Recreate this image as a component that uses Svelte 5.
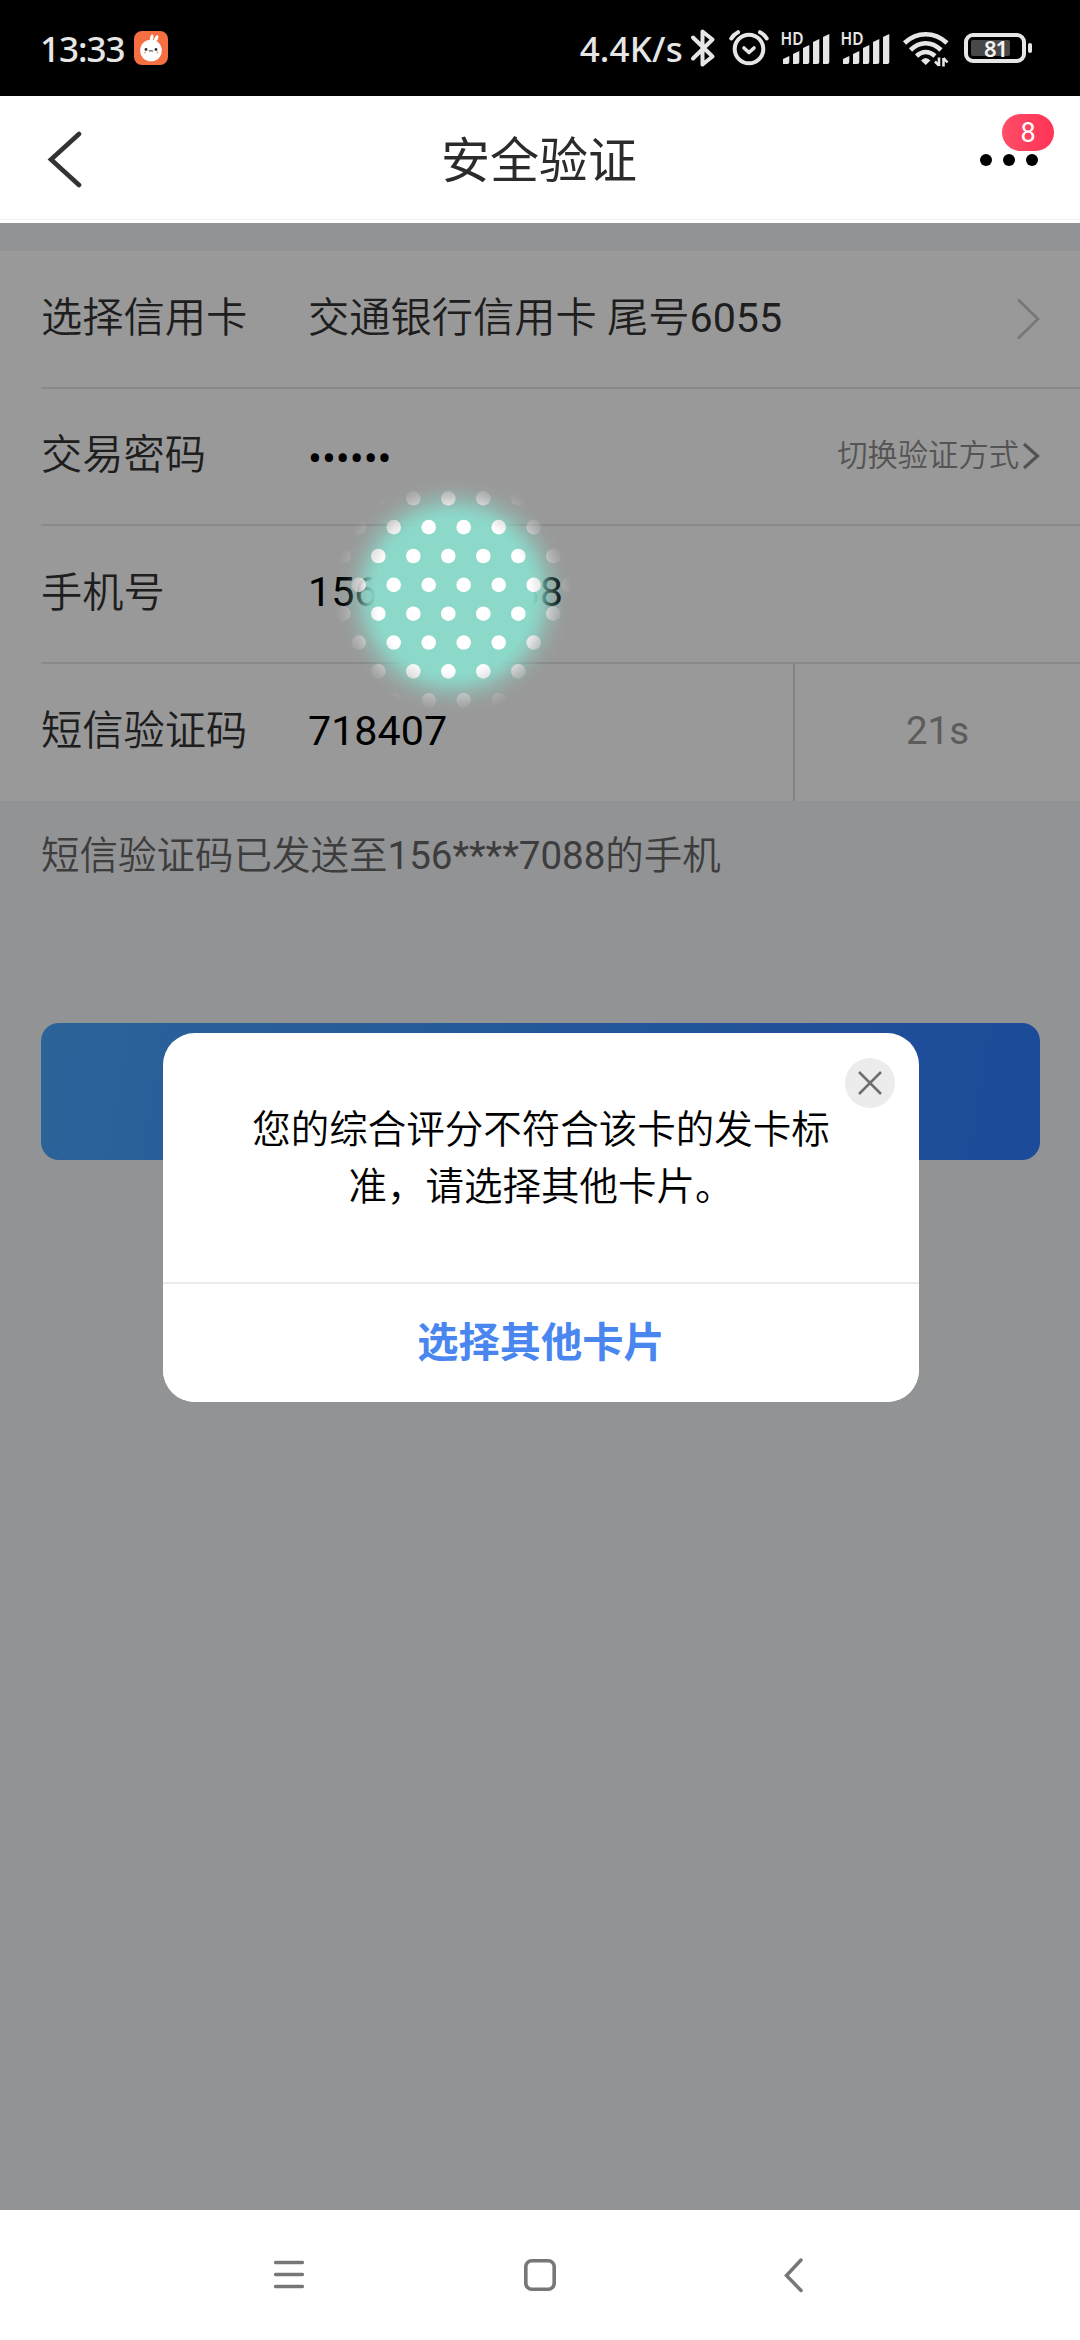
<script>
  const tarjeta = { banco: '交通银行信用卡', final: '6055' };
  let codigo = '718407';
  let segundos = 21;

  // Barras de señal: posición y altura de cada una
  const barras = [
    { x: 3, alto: 8 },
    { x: 13, alto: 13 },
    { x: 23, alto: 19 },
    { x: 33, alto: 25 },
    { x: 43, alto: 30 },
  ];

  // Trama de puntos del parche, filas alternas desplazadas
  const puntos = [];
  for (let fila = 0; fila < 8; fila++) {
    const inicio = fila % 2 ? 1.7 : -13.7;
    for (let col = 0; col < 8; col++) {
      puntos.push({ x: inicio + col * 35, y: 33.3 + fila * 28.85 });
    }
  }
</script>

<div class="pantalla">
  <!-- Barra de estado -->
  <div class="estado">
    <span class="hora">13:33</span>
    <svg class="conejo" width="34" height="34" viewBox="0 0 34 34">
      <rect width="34" height="34" rx="8" fill="#f56f43" />
      <ellipse cx="17.5" cy="7.5" rx="1.7" ry="4" fill="#fff" transform="rotate(12 17.5 8)" />
      <ellipse cx="22" cy="8" rx="1.7" ry="4" fill="#fff" transform="rotate(25 22 8)" />
      <circle cx="17" cy="19.5" r="10.8" fill="#fff" />
      <circle cx="12" cy="18.5" r="1.4" fill="#333" />
      <circle cx="22" cy="18.5" r="1.4" fill="#333" />
      <path d="M14.8 19.5q1.2 1.6 2.2 0q1.2 1.6 2.2 0" fill="none" stroke="#333" stroke-width="1" />
      <circle cx="11" cy="21.5" r="1" fill="#f5a98c" />
      <circle cx="23.5" cy="21.5" r="1" fill="#f5a98c" />
    </svg>
    <div class="iconos">
      <span class="velocidad">4.4K/s</span>
      <svg class="bt" width="26" height="40" viewBox="0 0 26 40">
        <path d="M3 9.5L22.5 28.5L12.5 36.5V3.5L22.5 11.5L3 30.5" fill="none" stroke="#e6e6e6" stroke-width="4" stroke-linejoin="round" stroke-linecap="round" />
      </svg>
      <svg class="alarma" width="40" height="40" viewBox="0 0 40 40" fill="none" stroke="#e6e6e6" stroke-width="4" stroke-linecap="round">
        <circle cx="20" cy="21" r="14.3" />
        <path d="M2.3 10.5Q4.5 6.5 9 4.2M37.7 10.5Q35.5 6.5 31 4.2" />
        <path d="M15 20L20 24.5L25 20" stroke-width="3.6" stroke-linejoin="round" />
      </svg>
      {#each [1, 2] as sim}
        <svg class="senal" width="52" height="56" viewBox="0 -8 52 56">
          <text class="hd" x="0.5" y="16.5" textLength="23" lengthAdjust="spacingAndGlyphs">HD</text>
          {#each barras as barra}
            <path d="M{barra.x} 36V{39 - barra.alto}L{barra.x + 6.3} {36 - barra.alto}V34Q{barra.x + 6.3} 36 {barra.x + 4.3} 36Z" fill="#e6e6e6" />
          {/each}
        </svg>
      {/each}
      <svg class="wifi" width="48" height="40" viewBox="0 0 48 40" fill="none" stroke="#e6e6e6" stroke-width="4.6">
        <path d="M2.5 15Q12 6.3 23.7 6.3T45 15" />
        <path d="M8.5 22Q15.5 15.2 23.7 15.2T39 22" />
        <path d="M14.5 28Q19 24 23.7 24T33 28" />
        <path d="M19 32.5Q23.7 27.5 28.4 32.5L23.7 37Z" fill="#e6e6e6" stroke="none" />
        <path d="M37 29.5V38M33 33.5L37 37.5M41.5 38.5V30M45.5 34.5L41.5 30" stroke-width="2.6" />
      </svg>
      <svg class="bateria" width="70" height="32" viewBox="0 0 70 32">
        <rect x="3" y="3" width="58" height="26" rx="7" fill="none" stroke="#e6e6e6" stroke-width="4" />
        <rect x="8" y="8" width="39" height="16" rx="2" fill="#484848" />
        <rect x="65" y="11" width="4" height="10" rx="2" fill="#e6e6e6" />
        <text class="carga" x="32.5" y="24.5" text-anchor="middle">81</text>
      </svg>
    </div>
  </div>

  <!-- Cabecera -->
  <header class="cabecera">
    <svg class="volver" width="36" height="58" viewBox="0 0 36 58">
      <path d="M32 3L4 28.5L32 54" fill="none" stroke="#333" stroke-width="4.6" stroke-linecap="round" />
    </svg>
    <h1>安全验证</h1>
    <div class="menu">
      <i></i><i></i><i></i>
      <span class="aviso">8</span>
    </div>
  </header>

  <main class="contenido">
    <div class="panel">
      <div class="fila">
        <span class="etiqueta">选择信用卡</span>
        <span class="valor tarjeta"><span class="fino">{tarjeta.banco}</span> <span class="fino">尾号</span>{tarjeta.final}</span>
        <svg class="flecha" width="24" height="42" viewBox="0 0 24 42">
          <path d="M2 1.5L22 21L2 40.5" fill="none" stroke="#c6c6c6" stroke-width="2.6" />
        </svg>
      </div>
      <div class="fila">
        <span class="etiqueta">交易密码</span>
        <span class="valor negro clave">••••••</span>
        <span class="cambiar">切换验证方式</span>
        <svg class="flecha" width="18" height="28" viewBox="0 0 18 28">
          <path d="M2 2L15.5 14L2 26" fill="none" stroke="#8a8a8a" stroke-width="3.2" />
        </svg>
      </div>
      <div class="fila">
        <span class="etiqueta">手机号</span>
        <span class="valor negro telefono"><span>156</span><span>88</span></span>
      </div>
      <div class="fila">
        <span class="etiqueta">短信验证码</span>
        <span class="valor negro">{codigo}</span>
        <span class="espera">{segundos}s</span>
      </div>
    </div>
    <p class="nota"><span class="fino">短信验证码已发送至</span>156****7088<span class="fino">的手机</span></p>
    <button class="enviar" aria-label="enviar"></button>

    <!-- Capa oscura y diálogo -->
    <div class="capa">
      <div class="dialogo">
        <button class="cerrar" aria-label="cerrar">
          <svg width="26" height="26" viewBox="0 0 26 26">
            <path d="M2 2L24 24M24 2L2 24" stroke="#6e6e6e" stroke-width="2.5" />
          </svg>
        </button>
        <p class="mensaje">您的综合评分不符合该卡的发卡标准，请选择其他卡片。</p>
        <button class="otra">选择其他卡片</button>
      </div>
    </div>

    <!-- Parche sobre el número -->
    <svg class="parche" width="260" height="260" viewBox="0 0 260 260">
      <defs>
        <radialGradient id="verde" gradientUnits="userSpaceOnUse" cx="132" cy="131" r="118">
          <stop offset="0.66" stop-color="#8cd9ca" />
          <stop offset="0.73" stop-color="#8cd9ca" stop-opacity="0.82" />
          <stop offset="0.83" stop-color="#8cd9ca" stop-opacity="0.35" />
          <stop offset="0.92" stop-color="#8cd9ca" stop-opacity="0.08" />
          <stop offset="1" stop-color="#8cd9ca" stop-opacity="0" />
        </radialGradient>
        <radialGradient id="blanco" gradientUnits="userSpaceOnUse" cx="131" cy="130" r="120">
          <stop offset="0.64" stop-color="#fff" />
          <stop offset="0.75" stop-color="#eee6e8" stop-opacity="0.9" />
          <stop offset="0.86" stop-color="#dccfd2" stop-opacity="0.45" />
          <stop offset="1" stop-color="#c8b4b8" stop-opacity="0" />
        </radialGradient>
      </defs>
      <circle cx="132" cy="131" r="118" fill="url(#verde)" />
      {#each puntos as p}
        <circle cx={p.x} cy={p.y} r="7.3" fill="url(#blanco)" />
      {/each}
    </svg>
  </main>

  <!-- Barra de navegación -->
  <nav class="navegacion">
    <svg width="34" height="36" viewBox="0 0 34 36">
      <path d="M3.5 5.5H30.5M3.5 17.5H30.5M3.5 29.5H30.5" stroke="#777" stroke-width="3.3" stroke-linecap="round" />
    </svg>
    <svg width="34" height="36" viewBox="0 0 34 36">
      <rect x="2.8" y="3.8" width="28.4" height="28.4" rx="6" fill="none" stroke="#777" stroke-width="3.6" />
    </svg>
    <svg width="34" height="36" viewBox="0 0 34 36">
      <path d="M27 3L12.5 18.5L27 33.5" fill="none" stroke="#777" stroke-width="3.5" stroke-linecap="round" />
    </svg>
  </nav>
</div>

<style>
  :global(body) {
    margin: 0;
    background: #fff;
  }

  .pantalla {
    width: 1080px;
    height: 2340px;
    display: flex;
    flex-direction: column;
    overflow: hidden;
    font-family: Roboto, "Noto Sans CJK SC", sans-serif;
  }

  svg {
    display: block;
    flex: none;
  }

  button {
    border: none;
    padding: 0;
    font-family: inherit;
  }

  .fino {
    font-weight: 350;
  }

  /* Barra de estado */
  .estado {
    height: 96px;
    box-sizing: border-box;
    padding: 0 47px 0 40px;
    background: #000;
    color: #e6e6e6;
    display: flex;
    align-items: center;
    font-family: "Noto Sans", sans-serif;
    font-size: 35px;
    font-weight: 500;
  }

  .hora {
    width: 94px;
    letter-spacing: -1px;
  }

  .iconos {
    display: flex;
    align-items: center;
    margin-left: auto;
  }

  .velocidad {
    letter-spacing: 0.2px;
  }

  .bt {
    margin-left: 7px;
  }

  .alarma {
    margin-left: 13px;
  }

  .senal {
    margin-left: 8px;
  }

  .alarma + .senal {
    margin-left: 11px;
  }

  .wifi {
    margin-left: 10px;
  }

  .bateria {
    margin-left: 13px;
  }

  .hd {
    font-size: 17px;
    font-weight: 600;
    fill: #e6e6e6;
  }

  .carga {
    font-size: 22px;
    font-weight: 600;
    letter-spacing: -1px;
    fill: #f2f2f2;
  }

  /* Cabecera */
  .cabecera {
    height: 127px;
    box-sizing: border-box;
    padding: 0 42px 0 47px;
    display: flex;
    align-items: center;
    justify-content: space-between;
    background: linear-gradient(#fff 123px, #f4f4f4 123px, #f4f4f4 124px, #fff 124px);
  }

  h1 {
    margin: 5px 0 0 15px;
    font-size: 49px;
    font-weight: 400;
    line-height: 72px;
    color: #2b2b2b;
  }

  .menu {
    position: relative;
    display: flex;
    gap: 11px;
  }

  .menu i {
    width: 12px;
    height: 12px;
    border-radius: 50%;
    background: #000;
  }

  .aviso {
    position: absolute;
    right: -16px;
    bottom: 15px;
    width: 52px;
    height: 37px;
    border-radius: 19px;
    background: linear-gradient(90deg, #ff4d68, #ff3355);
    color: #fff;
    font-size: 27px;
    line-height: 38px;
    text-align: center;
  }

  /* Formulario */
  .contenido {
    position: relative;
    height: 1987px;
    box-sizing: border-box;
    padding-top: 28px;
    background: #f4f5f8;
  }

  .panel {
    padding-left: 41px;
    background: #fff;
  }

  .fila {
    height: 137.5px;
    box-sizing: border-box;
    padding-right: 40px;
    display: flex;
    align-items: center;
    border-bottom: 2px solid #e4e4e4;
    font-size: 41.25px;
  }

  .fila:last-child {
    padding: 0;
    border-bottom: none;
  }

  .etiqueta {
    width: 267px;
    padding-bottom: 10px;
    font-weight: 350;
    color: #333;
  }

  .valor {
    flex: 1;
    padding-bottom: 3px;
    color: #333;
    white-space: nowrap;
  }

  .tarjeta {
    padding-bottom: 9px;
  }

  .negro {
    color: #000;
  }

  .clave {
    padding: 6px 0 0;
  }

  .telefono {
    display: flex;
    gap: 139px;
  }

  .cambiar {
    padding-bottom: 6px;
    font-size: 30.3px;
    font-weight: 350;
    color: #8c8c8c;
    margin-right: 3px;
  }

  .espera {
    width: 287px;
    align-self: stretch;
    box-sizing: border-box;
    border-left: 2px solid #dcdcdc;
    line-height: 133px;
    font-size: 38.5px;
    text-align: center;
    color: #999;
  }

  .nota {
    margin: 28px 0 0 41px;
    font-size: 38.5px;
    line-height: 54px;
    color: #666;
  }

  .enviar {
    display: block;
    width: 999px;
    height: 137px;
    margin: 140px 0 0 41px;
    border-radius: 18px;
    background: linear-gradient(100deg, #4aa6ff, #2f7dff);
  }

  /* Diálogo */
  .capa {
    position: absolute;
    inset: 0;
    background: rgba(0, 0, 0, 0.4);
    display: flex;
    align-items: center;
    justify-content: center;
  }

  .dialogo {
    position: relative;
    width: 756px;
    height: 369px;
    margin: 2px 0 0 2px;
    border-radius: 32px;
    background: #fff;
    display: flex;
    flex-direction: column;
    overflow: hidden;
  }

  .cerrar {
    position: absolute;
    top: 25px;
    right: 24px;
    width: 50px;
    height: 50px;
    border-radius: 50%;
    background: #ececec;
    display: flex;
    align-items: center;
    justify-content: center;
  }

  .mensaje {
    flex: 1;
    margin: 0;
    padding: 68px 80px 0;
    font-size: 38.5px;
    font-weight: 350;
    line-height: 57px;
    text-align: center;
    color: #000;
  }

  .otra {
    height: 120px;
    border-top: 2px solid #ebebeb;
    background: #fff;
    color: #4a86f0;
    font-size: 41.25px;
    font-weight: 700;
    padding-bottom: 8px;
  }

  .parche {
    position: absolute;
    left: 322px;
    top: 242px;
  }

  /* Navegación */
  .navegacion {
    flex: 1;
    display: flex;
    align-items: center;
    gap: 217px;
    padding-left: 272px;
    background: #fff;
  }
</style>
